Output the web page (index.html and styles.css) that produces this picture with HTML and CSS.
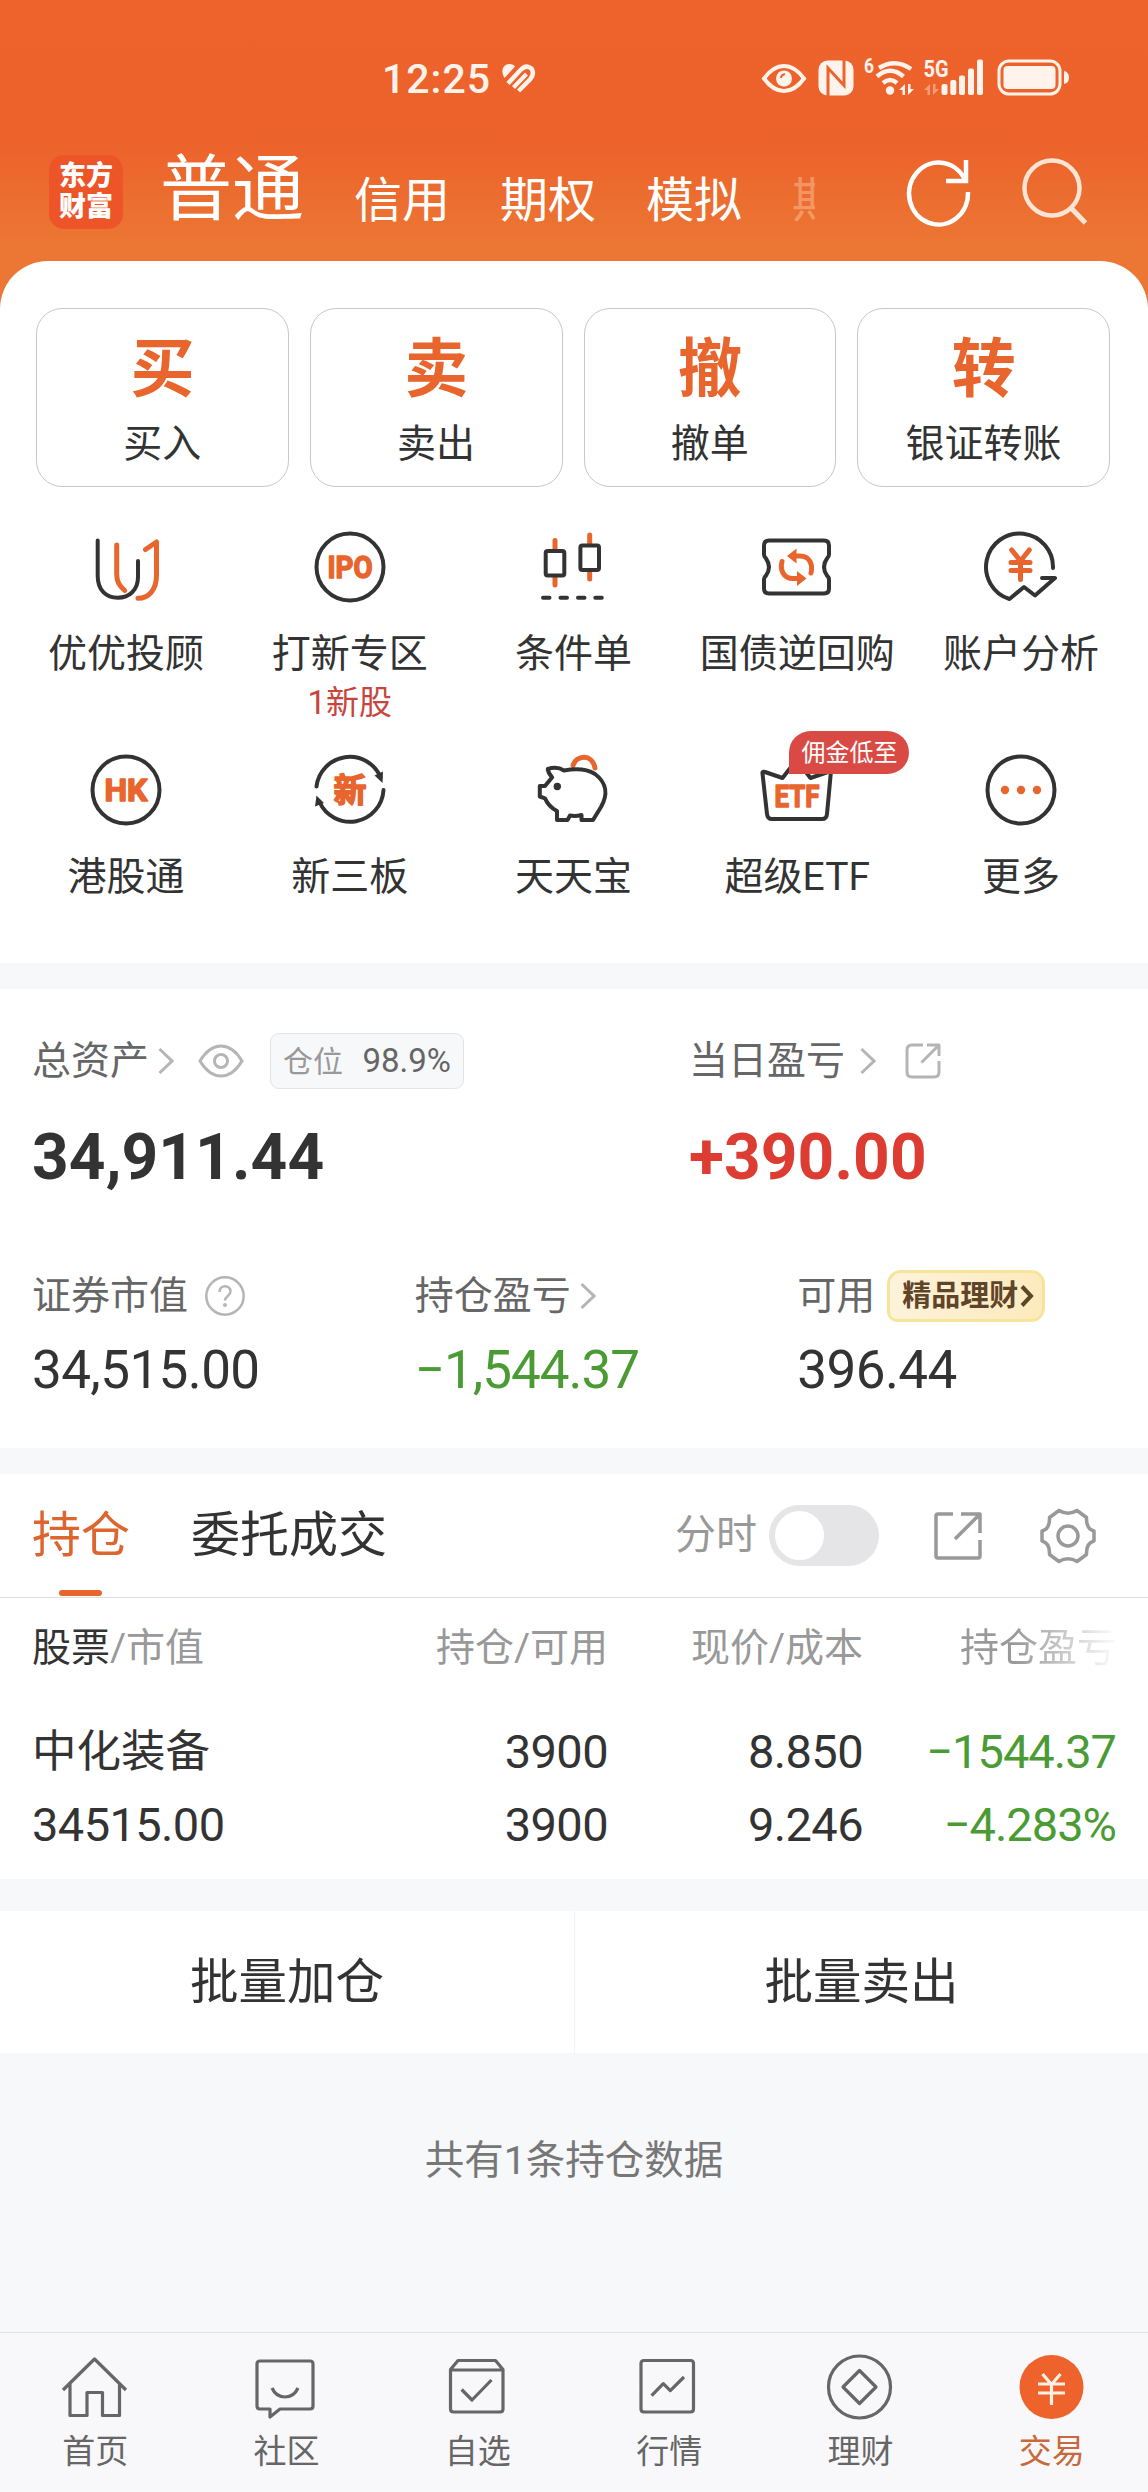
FILE: index.html
```html
<!DOCTYPE html>
<html lang="zh-CN">
<head>
    <meta charset="UTF-8">
    <meta name="viewport" content="width=device-width, initial-scale=1.0">
    <title>交易</title>
    <link rel="stylesheet" href="styles.css">
</head>
<body>
    <header class="header">
        <div class="status-bar">
            <div class="clock">
                <span class="time">12:25</span>
                <svg class="health" width="35" height="30" viewBox="0 0 35 30">
                    <path d="M3.500 15C-1 8 2 1 8.500 1c2.500 0 4.500 1 5.500 2.500z" fill="#fff3ec"/>
                    <path d="M7 20.500L19.500 7Q25 1 30.500 5.500Q34 11 29 16.500L17.500 28" fill="none" stroke="#fff3ec" stroke-width="4.500"/>
                    <path d="M12.500 24.500L25.500 11" stroke="#fff3ec" stroke-width="4"/>
                </svg>
            </div>
            <svg class="signals" width="310" height="40" viewBox="0 0 310 40">
                <g fill="none" stroke="#fff3ec">
                    <path d="M4 20.500Q13 8 24 8t20 12.500Q35 33 24 33T4 20.500z" stroke-width="4"/>
                    <path d="M119 10Q135 0 151 11" stroke-width="4.500"/>
                    <path d="M117 18.500Q130 7 143.500 18.500" stroke-width="4.500"/>
                    <path d="M123 25Q130 19 137 25" stroke-width="4.500"/>
                    <rect x="239" y="3" width="61" height="33" rx="10" stroke-width="3"/>
                </g>
                <g fill="#fff3ec">
                    <circle cx="24" cy="20.500" r="8"/>
                    <rect x="58.500" y="2.500" width="35" height="35" rx="9"/>
                    <circle cx="130" cy="32.500" r="4.200"/>
                    <path d="M145 26v11h-2.500v-5H139zM148 26v11l6-6h-3.500v-5z"/>
                    <path d="M170 26v11h-2.500v-5H164zM173 26v11l6-6h-3.500v-5z" opacity=".4"/>
                    <rect x="181.500" y="26" width="6" height="11" rx="2"/>
                    <rect x="190.300" y="22" width="6" height="15" rx="2"/>
                    <rect x="199" y="17.500" width="6" height="19.500" rx="2"/>
                    <rect x="208" y="10.500" width="6" height="26.500" rx="2"/>
                    <rect x="217" y="1.500" width="6" height="35.500" rx="2"/>
                    <rect x="243.500" y="8" width="52" height="23" rx="4"/>
                    <path d="M304 13q5 1 5 6.500t-5 6.500z"/>
                    <text class="net" x="104" y="15" font-size="20" textLength="10" lengthAdjust="spacingAndGlyphs">6</text>
                    <text class="net" x="163.500" y="18.500" font-size="23" textLength="25" lengthAdjust="spacingAndGlyphs">5G</text>
                </g>
                <path d="M21 20q0-3 4-4" fill="none" stroke="#ec632b" stroke-width="2"/>
                <path d="M68 38V10l16 17.500V2" fill="none" stroke="#ec632b" stroke-width="3"/>
            </svg>
        </div>
        <div class="top-nav">
            <div class="logo"><span>东方</span><span>财富</span></div>
            <nav class="accounts">
                <a class="account current">普通</a>
                <a class="account">信用</a>
                <a class="account">期权</a>
                <a class="account">模拟</a>
                <a class="account more">期</a>
            </nav>
            <svg class="refresh" width="70" height="76" viewBox="0 0 70 76">
                <path d="M62.500 28A29.500 31 0 1 0 65 39" fill="none" stroke="#fff" stroke-width="4.500"/>
                <path d="M63 7v21H43" fill="none" stroke="#fff" stroke-width="4.500"/>
            </svg>
            <svg class="search" width="70" height="76" viewBox="0 0 70 76">
                <circle cx="32" cy="33" r="27.500" fill="none" stroke="#fde4d4" stroke-width="4.500"/>
                <path d="M52 54l13.500 14" stroke="#fde4d4" stroke-width="5"/>
            </svg>
        </div>
    </header>

    <main>
        <section class="panel actions">
            <div class="trade-buttons">
                <div class="trade-btn"><b>买</b><span>买入</span></div>
                <div class="trade-btn"><b>卖</b><span>卖出</span></div>
                <div class="trade-btn"><b>撤</b><span>撤单</span></div>
                <div class="trade-btn"><b>转</b><span>银证转账</span></div>
            </div>
            <div class="shortcuts">
                <div class="shortcut">
                    <svg class="icon" viewBox="0 0 76 76">
                        <path class="dark" d="M9.700 11.500V47C9.700 61 18 68.700 29.700 68.700S50 61 50 48V32"/>
                        <path class="orange" d="M28.700 16v29c0 8 3 12 8 16.500"/>
                        <path class="orange" d="M57.500 20.500l11-7.500v33c0 15-8 23.300-18.500 23.300"/>
                    </svg>
                    <span>优优投顾</span>
                </div>
                <div class="shortcut">
                    <svg class="icon" viewBox="0 0 76 76">
                        <circle class="dark" cx="38" cy="38" r="33.500"/>
                        <text class="icon-text" x="15.500" y="49" font-size="31" textLength="45" lengthAdjust="spacingAndGlyphs">IPO</text>
                    </svg>
                    <span>打新专区</span>
                    <em>1新股</em>
                </div>
                <div class="shortcut">
                    <svg class="icon" viewBox="0 0 76 76">
                        <path class="orange" d="M20 11.500v9M20 48v8M54.700 6v9M54.700 42v8"/>
                        <rect class="dark" x="10.700" y="22" width="18.600" height="24.500" rx="2"/>
                        <rect class="dark" x="45.400" y="16.500" width="18.600" height="24.500" rx="2"/>
                        <path class="dark" d="M8 68.700h6.500M25.500 68.700H32M43 68.700h6.500M60.300 68.700h6.500"/>
                    </svg>
                    <span>条件单</span>
                </div>
                <div class="shortcut">
                    <svg class="icon" viewBox="0 0 76 76">
                        <path class="dark" d="M10 11.500h55q5 0 5 5v9q0 2-2 4-6 8.500 0 17 2 2 2 4v9q0 5-5 5H10q-5 0-5-5v-9q0-2 2-4 6-8.500 0-17-2-2-2-4v-9q0-5 5-5z"/>
                        <path class="orange" d="M36 27h5c10 0 13 9 11 17M39 49.500h-5c-10 0-13-9-11-17"/>
                        <path d="M28 27l9.500-7.500v15zM47.500 49.500L38 57V42z" fill="#e8652e"/>
                    </svg>
                    <span>国债逆回购</span>
                </div>
                <div class="shortcut">
                    <svg class="icon" viewBox="0 0 76 76">
                        <path class="dark" d="M70 39A33.500 33.500 0 1 0 26.500 70L41 58l11 8.500L72 49H59"/>
                        <path class="orange" d="M28.700 21l8.800 11 8.800-11M37.500 32v18.500M28 33.500h19M28 41.500h19"/>
                    </svg>
                    <span>账户分析</span>
                </div>
                <div class="shortcut">
                    <svg class="icon" viewBox="0 0 76 76">
                        <circle class="dark" cx="38" cy="38" r="33.500"/>
                        <text class="icon-text" x="16.500" y="49" font-size="31" textLength="43" lengthAdjust="spacingAndGlyphs">HK</text>
                    </svg>
                    <span>港股通</span>
                </div>
                <div class="shortcut">
                    <svg class="icon" viewBox="0 0 76 76">
                        <path class="dark" d="M4.500 34.500A33.500 33.500 0 0 1 68.500 25M71.500 38A33.500 33.500 0 0 1 7.500 50"/>
                        <path d="M70.500 31l-8-7.500 8.500-4zM4.500 43.500l-1.500 11 9-3.500z" fill="#333"/>
                        <text class="icon-text" x="38" y="50" font-size="33" text-anchor="middle">新</text>
                    </svg>
                    <span>新三板</span>
                </div>
                <div class="shortcut">
                    <svg class="icon" viewBox="0 0 76 76">
                        <path class="orange" d="M38 13.500C41 3 57 1 60 16"/>
                        <path class="dark" d="M12.800 17Q22 14 29 18.500C42 16 52 17 60 22c12 9 13 21 6 33l-8 13H46.500v-5q-6 1.500-11.500.500l-2.500 4.500H22v-9q-8-4-12-12.700l-5.200-1.800V34H10l7.200-8.700q-4-4-4.400-8.300z"/>
                        <circle cx="22.300" cy="34.500" r="3.700" fill="#333"/>
                    </svg>
                    <span>天天宝</span>
                </div>
                <div class="shortcut">
                    <svg class="icon" viewBox="0 0 76 76">
                        <path class="dark" d="M6 20l17.500 6L37.500 8l14 18L69 20q3-1 2.700 2L68 62q-.400 5-5 5H13q-4.500 0-5-5L3.500 21.500Q3 19 6 20z"/>
                        <text class="icon-text" x="15.500" y="55" font-size="31" textLength="45" lengthAdjust="spacingAndGlyphs">ETF</text>
                    </svg>
                    <i class="badge">佣金低至</i>
                    <span>超级ETF</span>
                </div>
                <div class="shortcut">
                    <svg class="icon" viewBox="0 0 76 76">
                        <circle class="dark" cx="38" cy="38" r="33.500"/>
                        <g fill="#e8652e">
                            <circle cx="22" cy="38" r="4.200"/>
                            <circle cx="38" cy="38" r="4.200"/>
                            <circle cx="54" cy="38" r="4.200"/>
                        </g>
                    </svg>
                    <span>更多</span>
                </div>
            </div>
        </section>

        <section class="panel assets">
            <div class="assets-top">
                <div class="asset total">
                    <div class="label">
                        总资产
                        <svg class="chevron near" width="16" height="28" viewBox="0 0 16 28"><path d="M1.500 2l12.500 12L1.500 26"/></svg>
                        <svg class="eye" width="46" height="34" viewBox="0 0 46 34">
                            <path d="M2 17Q11 2 23 2t21 15Q35 32 23 32T2 17z"/>
                            <circle cx="23" cy="17" r="6.500"/>
                        </svg>
                        <span class="position">仓位 <b>98.9%</b></span>
                    </div>
                    <div class="amount">34,911.44</div>
                </div>
                <div class="asset">
                    <div class="label">
                        当日盈亏
                        <svg class="chevron" width="16" height="28" viewBox="0 0 16 28"><path d="M1.500 2l12.500 12L1.500 26"/></svg>
                        <svg class="share-sm" width="36" height="36" viewBox="0 0 36 36">
                            <path d="M18 2H7Q2 2 2 7v22q0 5 5 5h22q5 0 5-5V18M22 2h12v11M34 2L16.500 19.500"/>
                        </svg>
                    </div>
                    <div class="amount up">+390.00</div>
                </div>
            </div>
            <div class="assets-bottom">
                <div class="asset">
                    <div class="label">
                        证券市值
                        <svg class="help" width="42" height="42" viewBox="0 0 42 42">
                            <circle cx="21" cy="21" r="18.700" fill="none" stroke="#b5b5b5" stroke-width="2.500"/>
                            <path d="M15.500 17c0-7.500 11-7.500 11-.5 0 4.500-5.500 4.500-5.500 9" fill="none" stroke="#b5b5b5" stroke-width="2.500"/>
                            <circle cx="21" cy="30" r="2" fill="#b5b5b5"/>
                        </svg>
                    </div>
                    <div class="value">34,515.00</div>
                </div>
                <div class="asset">
                    <div class="label">
                        持仓盈亏
                        <svg class="chevron near" width="16" height="28" viewBox="0 0 16 28"><path d="M1.500 2l12.500 12L1.500 26"/></svg>
                    </div>
                    <div class="value down">−1,544.37</div>
                </div>
                <div class="asset">
                    <div class="label">
                        可用
                        <span class="wealth">精品理财<svg width="14" height="24" viewBox="0 0 14 24"><path d="M2 2.500l9 9.500-9 9.500" fill="none" stroke="#5f4429" stroke-width="4"/></svg></span>
                    </div>
                    <div class="value">396.44</div>
                </div>
            </div>
        </section>

        <section class="panel holdings">
            <div class="tabs">
                <a class="tab active">持仓</a>
                <a class="tab">委托成交</a>
                <span class="switch-label">分时</span>
                <span class="switch"></span>
                <svg class="share" width="50" height="50" viewBox="0 0 50 50">
                    <path d="M20 3H5q-2 0-2 2v40q0 2 2 2h40q2 0 2-2V29M28 3h19v19M47 3L22 28"/>
                </svg>
                <svg class="gear" width="60" height="60" viewBox="-30 -30 60 60">
                    <path d="M26-5V5Q18 7 18.500 18.500L9 25.500Q0 20-9 25.500L-18.500 18.500Q-18 7-26 5V-5Q-18-7-18.500-18.500L-9-25.500Q0-20 9-25.500L18.500-18.500Q18-7 26-5z"/>
                    <circle r="10"/>
                </svg>
            </div>
            <div class="row head">
                <span><b>股票</b>/市值</span>
                <span>持仓/可用</span>
                <span>现价/成本</span>
                <span class="fade">持仓盈亏</span>
            </div>
            <div class="row">
                <span class="name">中化装备</span>
                <span>3900</span>
                <span>8.850</span>
                <span class="down">−1544.37</span>
            </div>
            <div class="row">
                <span>34515.00</span>
                <span>3900</span>
                <span>9.246</span>
                <span class="down">−4.283%</span>
            </div>
        </section>

        <section class="panel batch">
            <a>批量加仓</a>
            <a>批量卖出</a>
        </section>
        <p class="summary">共有1条持仓数据</p>
    </main>

    <footer class="tab-bar">
        <a class="tab-item">
            <svg viewBox="0 0 72 72"><path d="M4 39L35.500 8 67 39M11 32v32.500h17V41.500h15.500v23h17V32"/></svg>
            <span>首页</span>
        </a>
        <a class="tab-item">
            <svg viewBox="0 0 72 72"><path d="M10 10h50q3 0 3 3v42q0 3-3 3H30l-10 8v-8H10q-3 0-3-3V13q0-3 3-3zM22 37q4 9 13 9t13-9"/></svg>
            <span>社区</span>
        </a>
        <a class="tab-item">
            <svg viewBox="0 0 72 72"><path d="M8.500 18.500L16 9.500h37.500l7.500 9V58q0 3-3 3H11.500q-3 0-3-3zM8.500 19H61M19.600 38.500L30 49l19.500-20"/></svg>
            <span>自选</span>
        </a>
        <a class="tab-item">
            <svg viewBox="0 0 72 72"><path d="M11 9.500h46.500q3 0 3 3V58q0 3-3 3H11q-3 0-3-3V12.500q0-3 3-3zM18.600 44.600l11.700-12 7 7L51 26"/></svg>
            <span>行情</span>
        </a>
        <a class="tab-item">
            <svg viewBox="0 0 72 72"><circle cx="35.500" cy="36" r="31"/><path d="M35.500 19.500l16.500 16.500-16.500 16.500L19 36z"/></svg>
            <span>理财</span>
        </a>
        <a class="tab-item selected">
            <svg viewBox="0 0 72 72"><circle cx="35.500" cy="36" r="32"/><path d="M26.500 23l9 10.500 9-10.500M35.500 33v21M22 33h27M22 42h27"/></svg>
            <span>交易</span>
        </a>
    </footer>
</body>
</html>
```

FILE: styles.css
```css
* {
    box-sizing: border-box;
}
body {
    margin: 0;
    height: 2492px;
    display: flex;
    flex-direction: column;
    background: #f7f8fa;
    color: #333;
    font-family: Roboto, "Noto Sans CJK SC", sans-serif;
    font-size: 39px;
    line-height: 1;
}
b, em, i {
    font-weight: inherit;
    font-style: normal;
}
svg {
    display: block;
    flex: none;
}

/* header */
.header {
    height: 321px;
    flex: none;
    background: linear-gradient(#ee632b 0, #ec622b 140px, #ec7734 250px);
    color: #fff;
}
.status-bar {
    height: 140px;
    padding: 58px 78px 0 382px;
    display: flex;
    justify-content: space-between;
}
.clock {
    display: flex;
    gap: 10px;
    height: 42px;
    color: #fff3ec;
}
.time {
    width: 109px;
    font-size: 41px;
    line-height: 42px;
    font-weight: 500;
    letter-spacing: 1px;
}
.health {
    margin-top: 5px;
}
.signals {
    overflow: visible;
}
.net {
    font-weight: 700;
}
.top-nav {
    height: 121px;
    padding-left: 49px;
    display: flex;
}
.logo {
    width: 74px;
    height: 74px;
    margin-top: 15px;
    border-radius: 15px;
    background: #ed5528;
    display: flex;
    flex-direction: column;
    align-items: center;
    justify-content: center;
    gap: 4px;
    font-size: 27px;
    line-height: 27px;
    font-weight: 900;
}
.accounts {
    width: 657px;
    margin-left: 37px;
    display: flex;
    align-items: baseline;
    gap: 50px;
    white-space: nowrap;
}
.account {
    font-size: 48px;
    line-height: 121px;
}
.account.current {
    font-size: 72px;
    line-height: 105px;
    position: relative;
    top: -3px;
}
.account.more {
    width: 23px;
    overflow: hidden;
    color: rgba(255, 220, 190, .4);
}
.refresh {
    margin: 13px 0 0 86px;
}
.search {
    margin: 15px 0 0 47px;
}

/* panels */
main {
    flex: 1;
}
.panel {
    background: #fff;
}
.actions {
    height: 702px;
    margin-top: -60px;
    padding: 47px 15px 0 14px;
    border-radius: 48px 48px 0 0;
}
.trade-buttons {
    display: grid;
    grid-template-columns: repeat(4, 1fr);
    gap: 21px;
    padding: 0 23px 0 22px;
}
.trade-btn {
    height: 179px;
    border: 1.5px solid #c8c8c8;
    border-radius: 26px;
    display: flex;
    flex-direction: column;
    align-items: center;
    padding-top: 26px;
}
.trade-btn b {
    font-size: 64px;
    line-height: 70px;
    font-weight: 700;
    color: #e8652e;
}
.trade-btn span {
    margin-top: 19px;
    line-height: 40px;
}
.shortcuts {
    display: grid;
    grid-template-columns: repeat(5, 1fr);
    grid-auto-rows: 223px;
    padding-top: 42px;
}
.shortcut {
    position: relative;
    display: flex;
    flex-direction: column;
    align-items: center;
    white-space: nowrap;
}
.shortcut span {
    margin-top: 29px;
    line-height: 40px;
}
.shortcut em {
    margin-top: 12px;
    font-size: 33px;
    line-height: 34px;
    color: #c8453d;
}
.icon {
    width: 76px;
    height: 76px;
}
.dark, .orange {
    fill: none;
    stroke: #333;
    stroke-width: 4;
    stroke-linecap: round;
    stroke-linejoin: round;
}
.orange {
    stroke: #e8652e;
    stroke-width: 5;
}
.icon-text {
    fill: #e8652e;
    stroke: #e8652e;
    stroke-width: 1.5;
    stroke-linejoin: round;
    font-weight: 700;
}
.badge {
    position: absolute;
    left: 104px;
    top: -21px;
    width: 120px;
    height: 43px;
    border-radius: 22px 22px 22px 0;
    background: #da4a45;
    color: #fff;
    font-size: 24px;
    line-height: 45px;
    text-align: center;
}

/* assets */
.assets {
    height: 459px;
    margin-top: 26px;
    padding-top: 44px;
}
.assets-top {
    display: grid;
    grid-template-columns: 657px 1fr;
    height: 235px;
}
.assets-bottom {
    display: grid;
    grid-template-columns: repeat(3, 1fr);
}
.asset {
    padding-left: 32px;
}
.label {
    height: 56px;
    display: flex;
    align-items: center;
    color: #666;
    white-space: nowrap;
}
.chevron, .eye, .share-sm {
    fill: none;
    stroke: #b5b5b5;
    stroke-width: 3;
}
.chevron {
    margin-left: 15px;
}
.chevron.near {
    margin-left: 9px;
}
.eye {
    margin: 0 26px 0 24px;
}
.share-sm {
    margin-left: 29px;
    stroke-linejoin: round;
}
.help {
    margin-left: 16px;
}
.position {
    height: 56px;
    width: 194px;
    padding-left: 12px;
    border: 1.5px solid #e3e3e5;
    border-radius: 9px;
    background: #f7f8fa;
    font-size: 30px;
    line-height: 53px;
    color: #999;
}
.position b {
    margin-left: 12px;
    font-size: 33px;
    color: #666;
}
.amount {
    margin-top: 33px;
    font-size: 64px;
    line-height: 72px;
    font-weight: 700;
    letter-spacing: .1px;
}
.up {
    color: #dc3c32;
}
.down {
    color: #4b9b35;
}
.value {
    margin-top: 16px;
    font-size: 53px;
    line-height: 60px;
    letter-spacing: -.6px;
}
.value.down {
    letter-spacing: -1px;
}
.wealth {
    width: 158px;
    height: 52px;
    margin-left: 12px;
    padding-left: 12px;
    display: flex;
    align-items: center;
    gap: 2px;
    border: 3px solid #f7e49b;
    border-radius: 14px 14px 14px 10px;
    background: linear-gradient(100deg, #fdf3dc, #fceabb);
    color: #5f4429;
    font-size: 29px;
    font-weight: 700;
}

/* holdings */
.holdings {
    height: 405px;
    margin-top: 26px;
}
.tabs {
    height: 124px;
    margin-bottom: 13px;
    padding: 0 50px 0 32px;
    display: flex;
    align-items: center;
    border-bottom: 1.5px solid #dedede;
}
.tab {
    position: relative;
    margin-right: 61px;
    font-size: 49px;
    line-height: 127px;
}
.tab.active {
    color: #dd652f;
}
.tab.active::after {
    content: "";
    position: absolute;
    left: 27px;
    bottom: 3px;
    width: 43px;
    height: 6px;
    border-radius: 3px;
    background: #e8652e;
}
.switch-label {
    margin-left: auto;
    font-size: 41px;
    color: #999;
}
.switch {
    width: 110px;
    height: 61px;
    margin: 0 54px 0 12px;
    padding: 6px;
    border-radius: 31px;
    background: #e5e5e7;
}
.switch::before {
    content: "";
    display: block;
    width: 49px;
    height: 49px;
    border-radius: 50%;
    background: #fff;
}
.share, .gear {
    fill: none;
    stroke: #999;
    stroke-width: 3.5;
    stroke-linejoin: round;
}
.gear {
    margin-left: 55px;
}
.row {
    display: grid;
    grid-template-columns: 321px 255px 255px 253px;
    padding-left: 32px;
    height: 73px;
    line-height: 73px;
    font-size: 47px;
    letter-spacing: -.6px;
    text-align: right;
    white-space: nowrap;
}
.row > :first-child {
    text-align: left;
}
.row.head {
    height: 104px;
    line-height: 75px;
    font-size: 39px;
    letter-spacing: 0;
    color: #999;
}
.head b {
    color: #333;
}
.head .fade {
    background: linear-gradient(90deg, #999 60%, #f5f5f5 97%);
    -webkit-background-clip: text;
    background-clip: text;
    color: transparent;
}
.row .name {
    font-size: 44.5px;
    letter-spacing: 0;
    line-height: 75px;
}
.row .down {
    letter-spacing: -1px;
}
.batch {
    height: 142px;
    margin-top: 32px;
    display: grid;
    grid-template-columns: 1fr 1fr;
    text-align: center;
    font-size: 48.5px;
    line-height: 143px;
}
.batch a + a {
    border-left: 1px solid #f3f3f5;
}
.summary {
    margin: 88px 0 0;
    font-size: 39.5px;
    line-height: 40px;
    text-align: center;
    color: #777;
}

/* bottom tab bar */
.tab-bar {
    height: 160px;
    flex: none;
    display: grid;
    grid-template-columns: repeat(6, 1fr);
    border-top: 1.5px solid #e2e3e5;
    background: #f8f8fa;
}
.tab-item {
    display: flex;
    flex-direction: column;
    align-items: center;
    padding: 18px 1px 0 0;
    font-size: 33px;
    line-height: 36px;
    color: #666;
}
.tab-item svg {
    width: 72px;
    height: 72px;
    margin-bottom: 11px;
    fill: none;
    stroke: #666;
    stroke-width: 3.2;
    stroke-linejoin: round;
}
.tab-item.selected {
    color: #c9683a;
}
.selected svg circle {
    fill: #ee632b;
    stroke: none;
}
.selected svg path {
    stroke: #fff0e6;
}
```
